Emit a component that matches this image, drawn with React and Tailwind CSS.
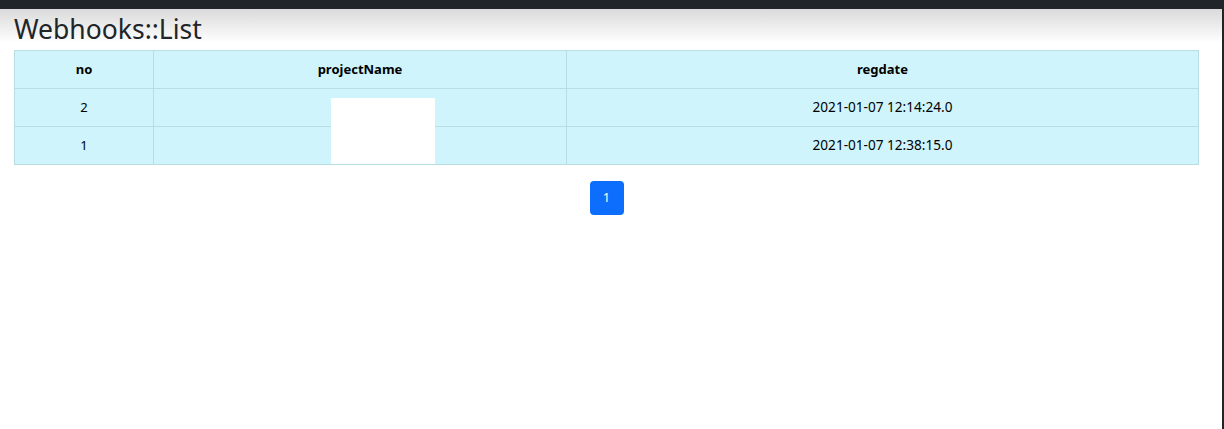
import React from 'react';

const rows = [
  { no: 2, regdate: '2021-01-07 12:14:24.0' },
  { no: 1, regdate: '2021-01-07 12:38:15.0' },
];

const App = () => {
  return (
    <div className="min-h-[429px] bg-white text-[#212529] border-r-2 border-[#212529]" style={{ fontFamily: '"Noto Sans", "Open Sans", sans-serif' }}>
      <div className="h-[9px] bg-[#212529]" />
      <div className="pl-[14px] pr-[23px] pt-[2px] bg-[linear-gradient(to_bottom,#dadada_0px,#ffffff_34px)]">
        <h1 className="text-[26.5px] leading-[36px] h-[39px]">Webhooks::List</h1>
        <div className="relative">
          <table className="w-full border-collapse text-[13px] text-black">
            <thead>
              <tr className="bg-[#cff4fc] h-[38px]">
                <th className="w-[139px] border border-[#badce3] font-bold">no</th>
                <th className="w-[413px] border border-[#badce3] font-bold">projectName</th>
                <th className="border border-[#badce3] font-bold">regdate</th>
              </tr>
            </thead>
            <tbody>
              {rows.map((r) => (
                <tr key={r.no} className="bg-[#cff4fc] h-[38px] text-center">
                  <td className="border border-[#badce3]">{r.no}</td>
                  <td className="border border-[#badce3]"></td>
                  <td className="border border-[#badce3] text-[13.6px]">{r.regdate}</td>
                </tr>
              ))}
            </tbody>
          </table>
          <div className="absolute left-[317px] top-[48px] w-[104px] h-[66px] bg-white" />
        </div>
        <div className="flex justify-center pt-[16px]">
          <button className="w-[34px] h-[34px] rounded-[4px] bg-[#0d6efd] text-white text-[13px]">1</button>
        </div>
      </div>
    </div>
  );
};

export default App;
